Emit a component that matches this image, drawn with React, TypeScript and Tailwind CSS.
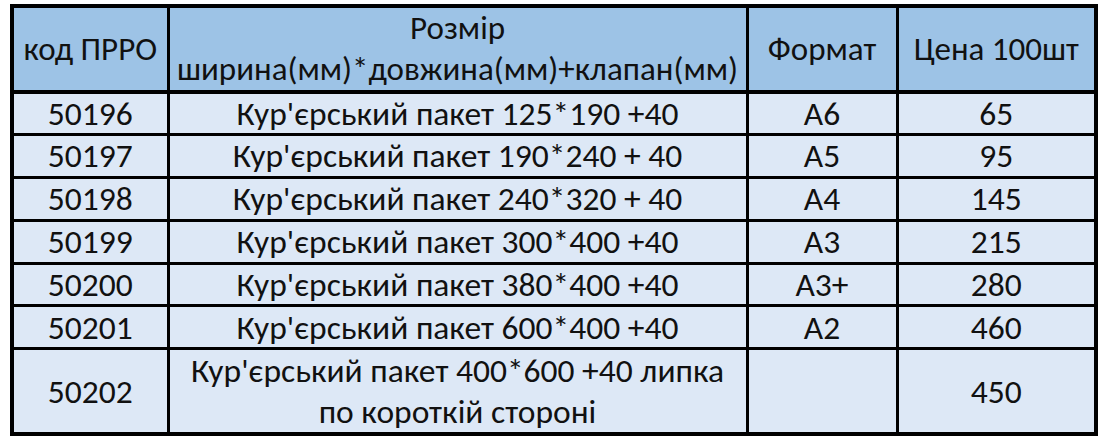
import React from "react";

const rows: [string, string, string, string][] = [
  ["50196", "Кур'єрський пакет 125*190 +40", "A6", "65"],
  ["50197", "Кур'єрський пакет 190*240 + 40", "A5", "95"],
  ["50198", "Кур'єрський пакет 240*320 + 40", "A4", "145"],
  ["50199", "Кур'єрський пакет 300*400 +40", "A3", "215"],
  ["50200", "Кур'єрський пакет 380*400 +40", "A3+", "280"],
  ["50201", "Кур'єрський пакет 600*400 +40", "A2", "460"],
];

const cell = "border-[3px] border-black text-center align-middle p-0";

export default function App() {
  return (
    <div className="w-[1104px] h-[436px] bg-white pt-[4px] pl-[10px] overflow-hidden" style={{ fontFamily: "Carlito, 'Open Sans', sans-serif" }}>
      <table className="table-fixed border-collapse border-[4px] border-black w-[1084px] text-[33.5px] text-[#111] leading-none">
        <colgroup>
          <col className="w-[156px]" />
          <col className="w-[579px]" />
          <col className="w-[150px]" />
          <col className="w-[199px]" />
        </colgroup>
        <thead>
          <tr className="bg-[#9dc3e6] h-[82px] border-b-[4px] border-black text-[33px]">
            <th className={cell + " font-normal"}>код ПРРО</th>
            <th className={cell + " font-normal leading-[41px]"}>
              Розмір
              <br />
              ширина(мм)*довжина(мм)+клапан(мм)
            </th>
            <th className={cell + " font-normal"}>Формат</th>
            <th className={cell + " font-normal"}>Цена 100шт</th>
          </tr>
        </thead>
        <tbody className="bg-[#dde8f6]">
          {rows.map((r) => (
            <tr key={r[0]} className="h-[42.8px]">
              <td className={cell}>{r[0]}</td>
              <td className={cell}>{r[1]}</td>
              <td className={cell}>{r[2]}</td>
              <td className={cell}>{r[3]}</td>
            </tr>
          ))}
          <tr className="h-[85px]">
            <td className={cell}>50202</td>
            <td className={cell + " leading-[41px]"}>
              Кур'єрський пакет 400*600 +40 липка
              <br />
              по короткій стороні
            </td>
            <td className={cell}></td>
            <td className={cell}>450</td>
          </tr>
        </tbody>
      </table>
    </div>
  );
}
